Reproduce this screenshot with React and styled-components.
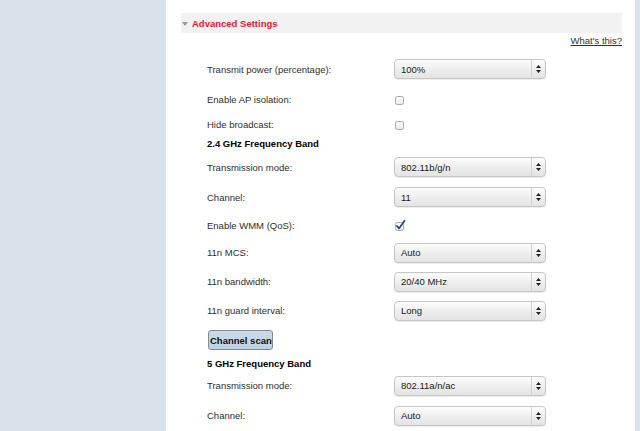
import React from "react";
import styled, { createGlobalStyle } from "styled-components";

const Global = createGlobalStyle`
  html, body { margin: 0; padding: 0; background: #fff; }
  body { font-family: "Liberation Sans", Arial, Helvetica, sans-serif; }
`;

const Page = styled.div`
  display: flex;
  width: 640px;
  height: 431px;
  overflow: hidden;
  background: #d9e1eb;
`;

const Sidebar = styled.div`
  width: 166px;
  flex: none;
  background: #d9e1eb;
`;

const Main = styled.div`
  width: 469px;
  flex: none;
  background: #fff;
  padding: 13px 13px 0 15px;
  box-sizing: border-box;
`;

const RightStrip = styled.div`
  flex: 1;
  background: #d9e1eb;
`;

const SectionHeader = styled.div`
  height: 20px;
  background: #f2f2f2;
  display: flex;
  align-items: center;
  padding-left: 1px;
  gap: 4px;
`;

const Caret = styled.span`
  width: 0;
  height: 0;
  border-left: 3px solid transparent;
  border-right: 3px solid transparent;
  border-top: 4px solid #999;
  margin-top: 1px;
`;

const SectionTitle = styled.span`
  color: #e0192f;
  font-weight: bold;
  font-size: 9.5px;
`;

const HelpLine = styled.div`
  height: 21px;
  padding-top: 2px;
  box-sizing: border-box;
  text-align: right;
  font-size: 9.5px;
  line-height: 12px;
`;

const HelpLink = styled.a`
  color: #333;
  text-decoration: underline;
  cursor: pointer;
`;

const Form = styled.div`
  display: flex;
  flex-direction: column;
  padding-left: 26px;
`;

const Row = styled.div`
  display: flex;
  align-items: center;
  height: ${(p) => p.$h}px;
`;

const Label = styled.div`
  width: 187px;
  flex: none;
  font-size: 9.5px;
  color: #2e2e2e;
`;

const Heading = styled.div`
  font-size: 9.5px;
  font-weight: bold;
  color: #000;
`;

const SelectBox = styled.div`
  width: 152px;
  height: 20px;
  box-sizing: border-box;
  display: flex;
  align-items: stretch;
  border: 1px solid #c6c6c6;
  border-radius: 4px;
  background: linear-gradient(#fdfdfd, #ececec 60%, #e4e4e4);
  box-shadow: 0 1px 1px rgba(0, 0, 0, 0.08);
  font-size: 9.5px;
  color: #1a1a1a;
`;

const SelectValue = styled.div`
  flex: 1;
  display: flex;
  align-items: center;
  padding-left: 6px;
`;

const SelectArrow = styled.div`
  width: 13px;
  border-left: 1px solid #d2d2d2;
  display: flex;
  align-items: center;
  justify-content: center;
`;

const CheckWrap = styled.span`
  display: inline-flex;
  margin-left: 1px;
  margin-top: ${(p) => p.$mt || 0}px;
`;

const ScanButton = styled.button`
  height: 20px;
  padding: 0 0 0 1px;
  margin-left: 1px;
  border: 1px solid #7f8c97;
  border-radius: 3px;
  background: linear-gradient(#cadcea, #bcd1e2);
  font-family: inherit;
  font-size: 9.5px;
  font-weight: bold;
  color: #111;
  cursor: pointer;
`;

const Select = ({ value }) => (
  <SelectBox>
    <SelectValue>{value}</SelectValue>
    <SelectArrow>
      <svg width="5" height="8" viewBox="0 0 5 8">
        <path d="M2.5 0 L5 3 L0 3 Z M0 5 L5 5 L2.5 8 Z" fill="#222" />
      </svg>
    </SelectArrow>
  </SelectBox>
);

const Checkbox = ({ checked, mt }) => (
  <CheckWrap $mt={mt}>
    <svg width="11" height="11" viewBox="0 0 11 11">
      <defs>
        <linearGradient id={checked ? "cbg1" : "cbg0"} x1="0" y1="0" x2="0" y2="1">
          <stop offset="0" stopColor="#ffffff" />
          <stop offset="1" stopColor="#e9e9e9" />
        </linearGradient>
      </defs>
      <rect
        x="0.5"
        y="2.5"
        width="8"
        height="8"
        rx="1.8"
        fill={`url(#${checked ? "cbg1" : "cbg0"})`}
        stroke="#a8a8a8"
      />
      {checked && (
        <path
          d="M2 6 L4 8.4 L9.5 0.8"
          fill="none"
          stroke="#26437a"
          strokeWidth="1.7"
          strokeLinecap="round"
          strokeLinejoin="round"
        />
      )}
    </svg>
  </CheckWrap>
);

const SelectRow = ({ h, label, value }) => (
  <Row $h={h}>
    <Label>{label}</Label>
    <Select value={value} />
  </Row>
);

const CheckRow = ({ h, label, checked, mt }) => (
  <Row $h={h}>
    <Label>{label}</Label>
    <Checkbox checked={checked} mt={mt} />
  </Row>
);

export default function App() {
  return (
    <>
      <Global />
      <Page>
        <Sidebar />
        <Main>
          <SectionHeader>
            <Caret />
            <SectionTitle>Advanced Settings</SectionTitle>
          </SectionHeader>
          <HelpLine>
            <HelpLink>What's this?</HelpLink>
          </HelpLine>
          <Form>
            <SelectRow h={30} label="Transmit power (percentage):" value="100%" />
            <CheckRow h={30} label="Enable AP isolation:" />
            <CheckRow h={20} label="Hide broadcast:" />
            <Row $h={18}>
              <Heading>2.4 GHz Frequency Band</Heading>
            </Row>
            <SelectRow h={30} label="Transmission mode:" value="802.11b/g/n" />
            <SelectRow h={30} label="Channel:" value="11" />
            <CheckRow h={26} label="Enable WMM (QoS):" checked mt={1} />
            <SelectRow h={29} label="11n MCS:" value="Auto" />
            <SelectRow h={29} label="11n bandwidth:" value="20/40 MHz" />
            <SelectRow h={29} label="11n guard interval:" value="Long" />
            <Row $h={30}>
              <ScanButton type="button">Channel scan</ScanButton>
            </Row>
            <Row $h={16}>
              <Heading>5 GHz Frequency Band</Heading>
            </Row>
            <SelectRow h={29} label="Transmission mode:" value="802.11a/n/ac" />
            <SelectRow h={31} label="Channel:" value="Auto" />
          </Form>
        </Main>
        <RightStrip />
      </Page>
    </>
  );
}
